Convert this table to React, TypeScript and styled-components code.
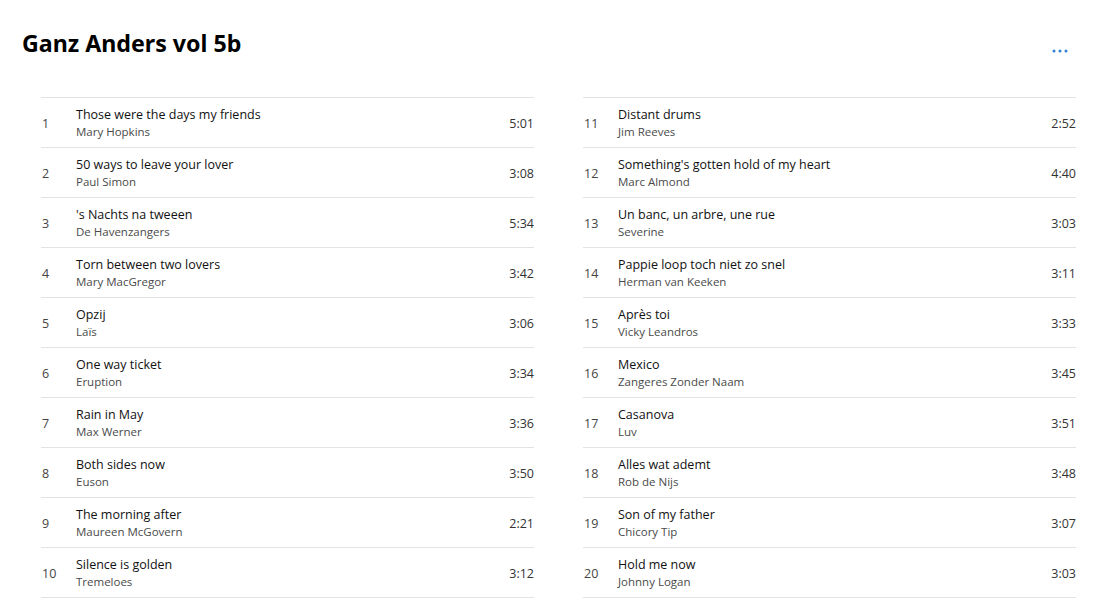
import React from "react";
import styled, { createGlobalStyle } from "styled-components";

const tracks = [
  { n: 1, title: "Those were the days my friends", artist: "Mary Hopkins", time: "5:01" },
  { n: 2, title: "50 ways to leave your lover", artist: "Paul Simon", time: "3:08" },
  { n: 3, title: "'s Nachts na tweeen", artist: "De Havenzangers", time: "5:34" },
  { n: 4, title: "Torn between two lovers", artist: "Mary MacGregor", time: "3:42" },
  { n: 5, title: "Opzij", artist: "Laïs", time: "3:06" },
  { n: 6, title: "One way ticket", artist: "Eruption", time: "3:34" },
  { n: 7, title: "Rain in May", artist: "Max Werner", time: "3:36" },
  { n: 8, title: "Both sides now", artist: "Euson", time: "3:50" },
  { n: 9, title: "The morning after", artist: "Maureen McGovern", time: "2:21" },
  { n: 10, title: "Silence is golden", artist: "Tremeloes", time: "3:12" },
  { n: 11, title: "Distant drums", artist: "Jim Reeves", time: "2:52" },
  { n: 12, title: "Something's gotten hold of my heart", artist: "Marc Almond", time: "4:40" },
  { n: 13, title: "Un banc, un arbre, une rue", artist: "Severine", time: "3:03" },
  { n: 14, title: "Pappie loop toch niet zo snel", artist: "Herman van Keeken", time: "3:11" },
  { n: 15, title: "Après toi", artist: "Vicky Leandros", time: "3:33" },
  { n: 16, title: "Mexico", artist: "Zangeres Zonder Naam", time: "3:45" },
  { n: 17, title: "Casanova", artist: "Luv", time: "3:51" },
  { n: 18, title: "Alles wat ademt", artist: "Rob de Nijs", time: "3:48" },
  { n: 19, title: "Son of my father", artist: "Chicory Tip", time: "3:07" },
  { n: 20, title: "Hold me now", artist: "Johnny Logan", time: "3:03" },
];

const GlobalStyle = createGlobalStyle`
  body {
    margin: 0;
    background: #fff;
    font-family: "Open Sans", "Noto Sans", sans-serif;
  }
`;

const Page = styled.main`
  width: 1113px;
  height: 604px;
  overflow: hidden;
  background: #fff;
`;

const Header = styled.header`
  display: flex;
  align-items: flex-start;
  justify-content: space-between;
  padding: 27px 38px 0 22px;
  height: 70px;
`;

const Title = styled.h1`
  margin: 0;
  font-family: "Noto Sans", "Open Sans", sans-serif;
  font-size: 23.2px;
  line-height: 32px;
  font-weight: 700;
  color: #000;
`;

const MoreButton = styled.button`
  width: 30px;
  height: 30px;
  margin-top: 9px;
  border: none;
  background: transparent;
  display: flex;
  align-items: center;
  justify-content: center;
  padding: 0;
  cursor: pointer;
`;

const Columns = styled.div`
  display: grid;
  grid-template-columns: 493px 493px;
  column-gap: 49px;
  padding: 0 37px 0 41px;
`;

const Column = styled.ol`
  list-style: none;
  margin: 0;
  padding: 0;
  border-top: 1px solid #e3e3e3;
`;

const Row = styled.li`
  display: flex;
  align-items: center;
  height: 49px;
  border-bottom: 1px solid #e3e3e3;
`;

const Num = styled.span`
  width: 34px;
  padding-left: 1px;
  padding-top: 2px;
  font-size: 12.5px;
  color: #444;
`;

const Info = styled.div`
  flex: 1;
  display: flex;
  flex-direction: column;
  margin-top: 1px;
`;

const SongTitle = styled.span`
  font-size: 12.5px;
  line-height: 17px;
  color: #111;
`;

const Artist = styled.span`
  font-size: 11.5px;
  line-height: 17px;
  color: #4a4a4a;
`;

const Time = styled.span`
  font-size: 12.5px;
  color: #333;
  padding-top: 2px;
`;

const TrackColumn: React.FC<{ items: typeof tracks }> = ({ items }) => (
  <Column>
    {items.map((t) => (
      <Row key={t.n}>
        <Num>{t.n}</Num>
        <Info>
          <SongTitle>{t.title}</SongTitle>
          <Artist>{t.artist}</Artist>
        </Info>
        <Time>{t.time}</Time>
      </Row>
    ))}
  </Column>
);

const App: React.FC = () => (
  <Page>
    <GlobalStyle />
    <Header>
      <Title>Ganz Anders vol 5b</Title>
      <MoreButton aria-label="More">
        <svg width="16" height="4" viewBox="0 0 16 4">
          <circle cx="2" cy="2" r="1.5" fill="#2f80d5" />
          <circle cx="8" cy="2" r="1.5" fill="#2f80d5" />
          <circle cx="14" cy="2" r="1.5" fill="#2f80d5" />
        </svg>
      </MoreButton>
    </Header>
    <Columns>
      <TrackColumn items={tracks.slice(0, 10)} />
      <TrackColumn items={tracks.slice(10)} />
    </Columns>
  </Page>
);

export default App;
